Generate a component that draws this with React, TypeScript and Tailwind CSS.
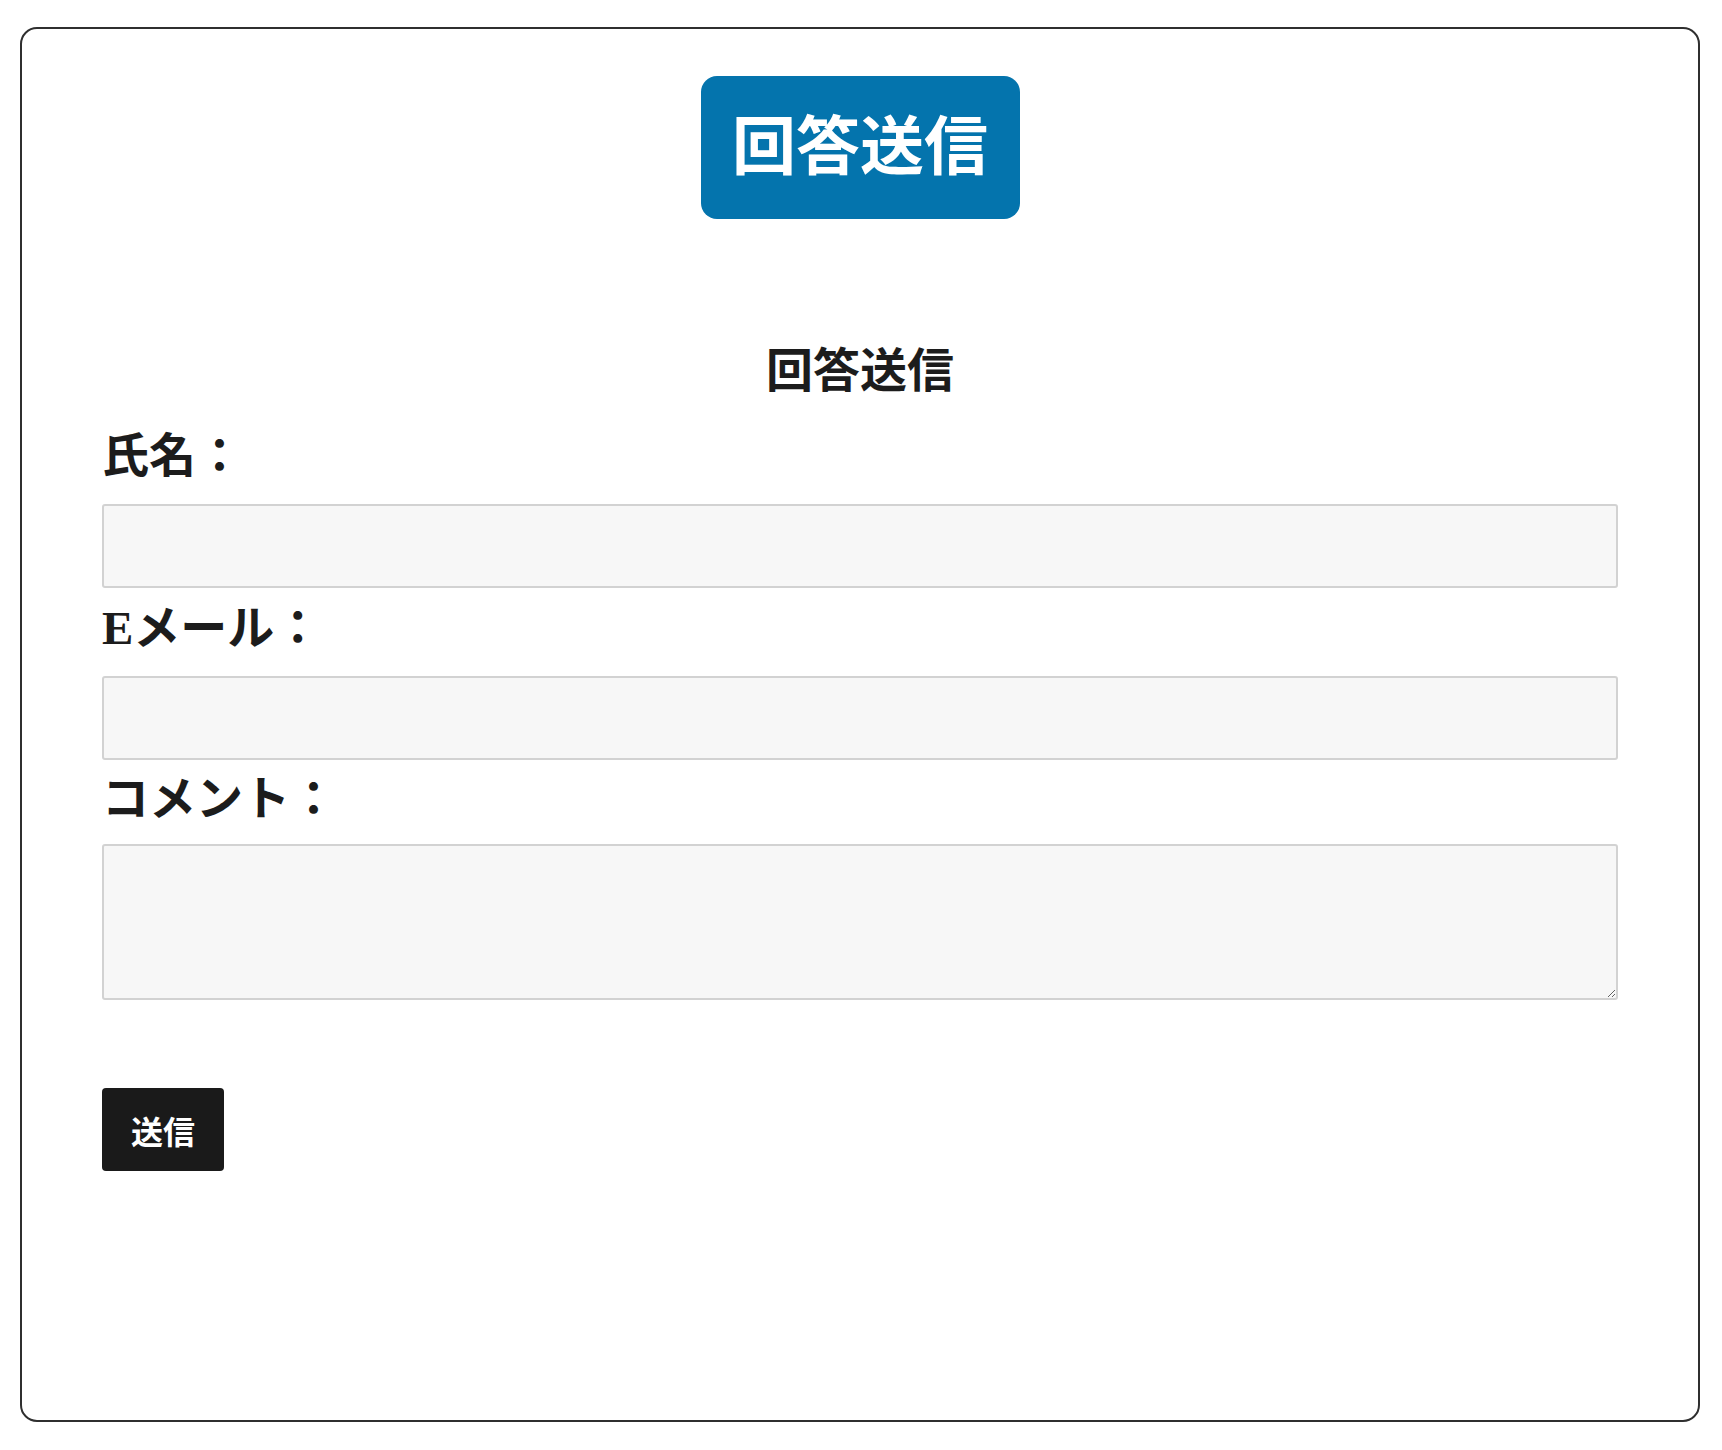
import { useState } from 'react'

const serif = "font-['Liberation_Serif','Noto_Sans_CJK_JP',serif]"
const sans = "font-['Noto_Sans_CJK_JP','Noto_Sans',sans-serif]"

export default function App() {
  const [name, setName] = useState('')
  const [email, setEmail] = useState('')
  const [comment, setComment] = useState('')

  return (
    <div className="min-h-[1450px] bg-white pt-[27px]">
      <div className="ml-[20px] h-[1395px] w-[1680px] rounded-[17px] border-2 border-[#2f2f2f] pt-[47px]">
        {/* Top badge */}
        <div className="flex justify-center">
          <div
            className={`flex h-[143px] w-[319px] items-center justify-center rounded-[16px] bg-[#0474ad] text-[64px] font-bold leading-none text-white ${serif}`}
          >
            回答送信
          </div>
        </div>

        <form
          className={`px-[80px] text-[#1c1c1c] ${serif}`}
          onSubmit={(e) => e.preventDefault()}
        >
          <h2 className="mt-[117px] text-center text-[47px] font-bold leading-[70px]">
            回答送信
          </h2>

          <label className="mt-[15px] mb-[13px] block text-[47px] font-bold leading-[70px]">
            氏名：
          </label>
          <input
            type="text"
            value={name}
            onChange={(e) => setName(e.target.value)}
            className="block h-[84px] w-full rounded-[3px] border-2 border-[#d2d2d2] bg-[#f7f7f7] px-3 outline-none"
          />

          <label className="mt-[5px] mb-[13px] block text-[47px] font-bold leading-[70px]">
            Eメール：
          </label>
          <input
            type="email"
            value={email}
            onChange={(e) => setEmail(e.target.value)}
            className="block h-[84px] w-full rounded-[3px] border-2 border-[#d2d2d2] bg-[#f7f7f7] px-3 outline-none"
          />

          <label className="mt-[4px] mb-[10px] block text-[47px] font-bold leading-[70px]">
            コメント：
          </label>
          <textarea
            value={comment}
            onChange={(e) => setComment(e.target.value)}
            className="block h-[156px] w-full rounded-[3px] border-2 border-[#d2d2d2] bg-[#f7f7f7] px-3 py-2 outline-none"
          />

          <button
            type="submit"
            className={`mt-[88px] flex h-[83px] w-[122px] items-center justify-center rounded-[4px] bg-[#1a1a1a] text-[32px] font-bold leading-none text-white ${sans}`}
          >
            送信
          </button>
        </form>
      </div>
    </div>
  )
}
